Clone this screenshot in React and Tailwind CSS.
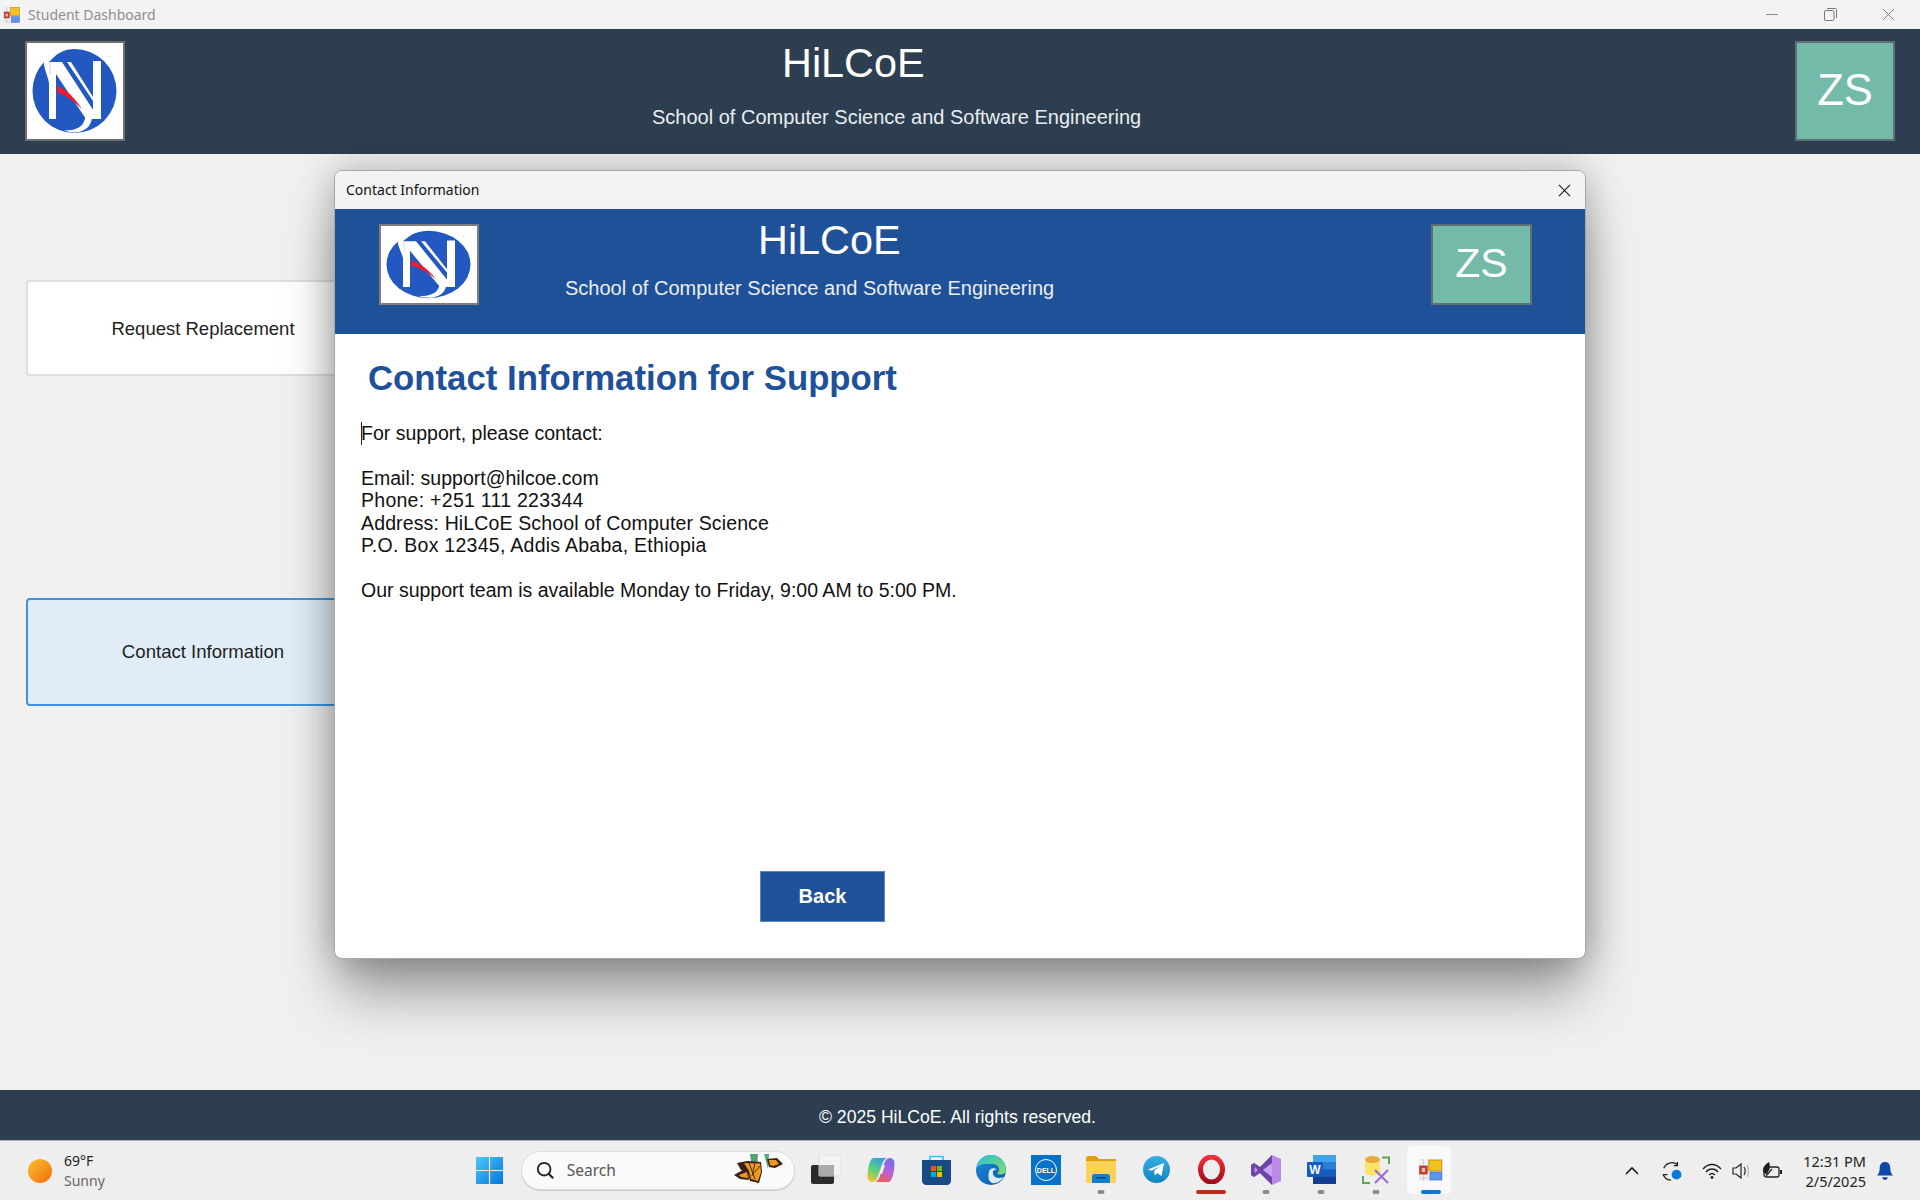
const sans = { fontFamily: '"Liberation Sans", Arial, sans-serif' };

function Logo({ className }) {
  return (
    <svg viewBox="2 2 96 96" preserveAspectRatio="none" className={className}>
      <circle cx="49.5" cy="50" r="42" fill="#2358c0" />
      <path d="M44 8C30 9 18 14 19 24C20 30 23 36 24 42L24 21L29 16C33 12 38 10 44 8Z" fill="#fff" />
      <path d="M24 21H37L74 78H61L31 33V78H24Z" fill="#fff" />
      <path d="M25 21V34" stroke="#cdd6e6" strokeWidth="1" />
      <path d="M68 20H76V78H71L68 74Z" fill="#fff" />
      <path d="M42 21H46L68 56V60Z" fill="#fff" />
      <path d="M32 45C41 48 50 57 57 68C49 60 41 55 32 51Z" fill="#ee1c32" />
      <path d="M61 75L67 77C66 84 62 89 54 91C48 92 43 91 39 89C47 90 53 88 57 84C59 81 60 78 61 75Z" fill="#fff" />
      <circle cx="84" cy="15" r=".5" fill="#8a8a8a" />
    </svg>
  );
}

function AppIcon({ className }) {
  return (
    <svg viewBox="0 0 24 24" preserveAspectRatio="none" className={className}>
      <rect x="1" y="1" width="22" height="22" fill="#eef0f3" />
      <path d="M1 8H9M1 16H9M1 20H9M5 1V8M5 16V23" stroke="#c9cbd0" strokeWidth="1" />
      <rect x="1.5" y="8" width="7" height="8" fill="#d23a30" stroke="#8f3a30" strokeWidth=".6" />
      <rect x="3.5" y="10" width="3" height="4" fill="#f3b5ac" />
      <rect x="10" y="2" width="12" height="11" fill="#f4c11e" stroke="#a8801a" strokeWidth=".7" />
      <rect x="11" y="14" width="11" height="8" fill="#5e95e6" stroke="#3d6fc0" strokeWidth=".6" />
    </svg>
  );
}

function X({ className, color = '#111', w = 1.1 }) {
  return (
    <svg viewBox="0 0 14 14" className={className}>
      <path d="M1 1L13 13M13 1L1 13" stroke={color} strokeWidth={w} fill="none" />
    </svg>
  );
}

function Zs({ className, text }) {
  return (
    <div style={sans} className={`flex items-center justify-center bg-[#73baa9] text-white border-2 border-[#5f6f74] ${text} ${className}`}>
      ZS
    </div>
  );
}

function Dot({ c = '#8b8b8b', w = 'w-[7px]' }) {
  return <span className={`absolute bottom-[6px] left-1/2 -translate-x-1/2 h-[4px] rounded-full ${w}`} style={{ backgroundColor: c }} />;
}

function TaskIcon({ children, dot, active }) {
  return (
    <div className="relative flex items-center justify-center w-[55px] h-[59px]">
      {active && <span className="absolute left-[3px] right-[9px] top-[5px] bottom-[6px] rounded-[5px] bg-[#f9f9f9] shadow-[2px_0_0_#f5f5f5]" />}
      <span className="relative flex items-center justify-center -mt-[2px]">{children}</span>
      {dot}
    </div>
  );
}

const Snap = () => (
  <svg width="30" height="29" viewBox="0 0 30 29">
    <rect x="0" y="10" width="23" height="19" rx="2" fill="#2a2a2a" />
    <rect x="8" y="0" width="22" height="21" rx="1" fill="#f3f3f3" stroke="#dddddd" />
    <rect x="8" y="10" width="15" height="11" fill="#ababab" />
  </svg>
);
const Copilot = () => (
  <svg width="28" height="26" viewBox="0 0 28 26">
    <defs>
      <linearGradient id="cpa" x1="0.7" y1="0" x2="0.2" y2="1"><stop offset="0" stopColor="#2f9fe8" /><stop offset=".55" stopColor="#5fd07a" /><stop offset="1" stopColor="#f3c62f" /></linearGradient>
      <linearGradient id="cpb" x1="0.7" y1="0" x2="0.3" y2="1"><stop offset="0" stopColor="#6f6fe8" /><stop offset=".5" stopColor="#b85fd8" /><stop offset="1" stopColor="#f2604e" /></linearGradient>
    </defs>
    <path d="M6 1H20C17 2 15.5 5 14.5 9L11 19C10 22 8 25 5 25C2 25 0 22 .5 18C1 12 2 3 6 1Z" fill="url(#cpa)" />
    <path d="M22 25H8C11 24 12.5 21 13.5 17L17 7C18 4 20 1 23 1C26 1 28 4 27.5 8C27 14 26 23 22 25Z" fill="url(#cpb)" />
    <path d="M13 17L15.5 9L18 8L15 17Z" fill="#f6eef8" />
  </svg>
);
const Store = () => (
  <svg width="29" height="30" viewBox="0 0 29 30">
    <path d="M8 6V1.5H21V6" fill="none" stroke="#2ec4ef" strokeWidth="1.6" />
    <path d="M0 5H29V26C29 28 27 30 25 30H4C2 30 0 28 0 26Z" fill="#194a86" />
    <rect x="9" y="11" width="5" height="5" fill="#f25022" />
    <rect x="15" y="11" width="5" height="5" fill="#7fba00" />
    <rect x="9" y="17" width="5" height="5" fill="#00a4ef" />
    <rect x="15" y="17" width="5" height="5" fill="#ffb900" />
  </svg>
);
const Edge = () => (
  <svg width="30" height="30" viewBox="0 0 30 30">
    <defs>
      <linearGradient id="eda" x1="0" y1="0" x2="1" y2="1"><stop offset="0" stopColor="#2cc2d6" /><stop offset="1" stopColor="#7fdc6a" /></linearGradient>
      <linearGradient id="edb" x1="0" y1="0" x2="1" y2="1"><stop offset="0" stopColor="#1a8bdc" /><stop offset="1" stopColor="#0c5aa8" /></linearGradient>
    </defs>
    <circle cx="15" cy="15" r="15" fill="url(#edb)" />
    <path d="M0.5 13C2 5 8 0 15 0C24 0 30 7 30 16C30 19 25 20 21 19C25 15 23 9 16 9C9 8 3 9 .5 13Z" fill="url(#eda)" />
    <path d="M13 17C13 13 19 12 21 15C18 14 16 16 17 19C18 23 23 24 28 22C25 26 20 29 16 28C12 26 12 21 13 17Z" fill="#eef5fb" opacity=".92" />
  </svg>
);
const Dell = () => (
  <svg width="30" height="30" viewBox="0 0 30 30">
    <rect width="30" height="30" fill="#0672cb" />
    <circle cx="15" cy="15" r="10.5" fill="none" stroke="#fff" strokeWidth="1" />
    <text x="15" y="17.5" textAnchor="middle" fontSize="7" fill="#fff" fontWeight="700" style={sans}>DELL</text>
  </svg>
);
const Folder = () => (
  <svg width="30" height="27" viewBox="0 0 30 27">
    <path d="M0 3C0 1 1 0 3 0H10L13 3H30V10H0Z" fill="#e0a100" />
    <rect x="0" y="5" width="30" height="22" rx="1" fill="#fcd25a" />
    <path d="M6 27V20C6 19 7 18 8 18H22C23 18 24 19 24 20V27Z" fill="#0f7fd0" />
    <rect x="10" y="21" width="10" height="1.4" fill="#063c70" />
  </svg>
);
const Telegram = () => (
  <svg width="27" height="27" viewBox="0 0 27 27">
    <defs><linearGradient id="tg" x1="0" y1="0" x2="0" y2="1"><stop offset="0" stopColor="#38aee5" /><stop offset="1" stopColor="#0f84bf" /></linearGradient></defs>
    <circle cx="13.5" cy="13.5" r="13.5" fill="url(#tg)" />
    <path d="M5 13.5L21 7L18.5 20L14 17L12 19.5L11 15L17.5 10L8.5 14.8Z" fill="#fff" />
  </svg>
);
const Opera = () => (
  <svg width="27" height="29" viewBox="0 0 27 29">
    <defs><linearGradient id="op" x1="0" y1="0" x2="0" y2="1"><stop offset="0" stopColor="#f0303c" /><stop offset="1" stopColor="#a50b18" /></linearGradient></defs>
    <ellipse cx="13.5" cy="14.5" rx="11" ry="12.5" fill="none" stroke="url(#op)" strokeWidth="5" />
  </svg>
);
const VS = () => (
  <svg width="30" height="30" viewBox="0 0 30 30">
    <path d="M21 0L30 4V26L21 30L9 18L3 22L0 20V10L3 8L9 12Z" fill="#b98ae8" />
    <path d="M21 0L9 12L3 8L0 10V20L3 22L9 18L21 30Z" fill="#6c45a8" />
    <path d="M21 8V22L12 15Z" fill="#c9a3f2" />
    <path d="M4 12L3 15L4 18L7 15Z" fill="#b98ae8" />
  </svg>
);
const Word = () => (
  <svg width="29" height="29" viewBox="0 0 29 29">
    <rect x="6" y="0" width="23" height="29" rx="2" fill="#2b7cd3" />
    <rect x="6" y="0" width="23" height="7" fill="#41a5ee" />
    <rect x="6" y="14.5" width="23" height="7" fill="#185abd" />
    <rect x="6" y="21.5" width="23" height="7.5" fill="#103f91" />
    <rect x="0" y="7" width="16" height="15" rx="1" fill="#185abd" />
    <text x="8" y="19" textAnchor="middle" fontSize="12" fontWeight="700" fill="#fff" style={sans}>W</text>
  </svg>
);
const DbTool = () => (
  <svg width="28" height="28" viewBox="0 0 28 28">
    <path d="M20 1.5H27V8M1 20V27H8" fill="none" stroke="#58a55c" strokeWidth="2" />
    <path d="M3 3V16C3 18 7 19.5 10.5 19.5C14 19.5 18 18 18 16V3Z" fill="#fbe36a" />
    <ellipse cx="10.5" cy="3.5" rx="7.5" ry="3.5" fill="#e8a93c" />
    <path d="M13 27L26 14M26 27L13 14" stroke="#9a6fd0" strokeWidth="2.2" />
  </svg>
);

function Butterfly() {
  return (
    <svg width="70" height="44" viewBox="0 0 70 44">
      <path d="M25 6C26 16 30 28 33 37C33 26 32 14 33 6Z" fill="#4fa36c" />
      <path d="M39 6L43 21L44 6Z" fill="#5aa978" />
      <path d="M12 15L22 13L36 14L37 24L34 35L25 33L23 26L16 22Z" fill="#3a2218" />
      <path d="M19 15L35 15.5L36 24L33 33L26 31L24 23Z" fill="#ee9a1c" />
      <path d="M24 15L30 31M30 15L27 28M35 18L28 26" stroke="#3a2218" strokeWidth=".9" />
      <path d="M9 27L16 23L23 22L24 32L15 31Z" fill="#3a2218" />
      <path d="M14 27L22 24L23 30L16 29Z" fill="#ee9a1c" />
      <path d="M42 11L52 10L58 16L50 20L44 19Z" fill="#3a2218" />
      <path d="M44 12L51 12L54 16L48 18L45 17Z" fill="#e89a24" />
    </svg>
  );
}

export default function App() {
  return (
    <div className="relative flex flex-col w-[1920px] h-[1200px] overflow-hidden bg-[#f0f0f0]" style={sans}>
      <div className="flex items-center h-[29px] bg-[#f3f3f3] shrink-0">
        <AppIcon className="ml-[3px] w-[18px] h-[18px]" />
        <span className="ml-[7px] text-[14px] text-[#8e8e8e]" style={{ fontFamily: '"Noto Sans", sans-serif' }}>Student Dashboard</span>
        <div className="ml-auto flex items-center mr-[3px]">
          <span className="w-[58px] flex justify-center"><span className="block w-[12px] h-px bg-[#8a8a8a]" /></span>
          <span className="w-[58px] flex justify-center">
            <svg width="13" height="13" viewBox="0 0 13 13"><rect x=".5" y="2.5" width="9.5" height="10" rx="1.5" fill="none" stroke="#777" /><path d="M3 .5H11C12 .5 12.5 1 12.5 2V10" fill="none" stroke="#777" /></svg>
          </span>
          <span className="w-[58px] flex justify-center"><X className="w-[13px] h-[13px]" color="#777" w={1} /></span>
        </div>
      </div>

      <header className="flex items-center justify-between h-[125px] px-[25px] pb-[1px] bg-[#2c3e50] shrink-0">
        <div className="w-[100px] h-[100px] bg-white border-2 border-[#6f6f6f] shrink-0">
          <Logo className="w-full h-full" />
        </div>
        <div className="flex-1 h-full flex flex-col pl-[527px] text-white">
          <div className="ml-[130px] mt-[11px] text-[41.4px] leading-[46px]">HiLCoE</div>
          <div className="mt-[19px] text-[20px] leading-[24px] text-[#e9edf1]">School of Computer Science and Software Engineering</div>
        </div>
        <Zs className="w-[100px] h-[100px] shrink-0" text="text-[43.5px]" />
      </header>

      <main className="flex-1 flex flex-col px-[26px]">
        <div className="mt-[126px] w-[354px] h-[96px] flex items-center justify-center pt-[1px] bg-white border-2 border-[#dedede] rounded-[4px] text-[18.5px] text-[#1e1e1e]">Request Replacement</div>
        <div className="mt-[222px] w-[354px] h-[108px] flex items-center justify-center bg-[#e0edf8] border-2 border-[#3d94dc] rounded-[4px] text-[18.6px] text-[#1e1e1e]">Contact Information</div>
      </main>

      <footer className="flex items-center justify-center h-[51px] bg-[#2c3e50] text-white text-[17.6px] shrink-0 pt-[4px] pr-[5px] border-b border-[#a9aeb2]">© 2025 HiLCoE. All rights reserved.</footer>

      <div className="relative flex items-center h-[59px] bg-[#eeeeee] shrink-0" style={{ fontFamily: '"Noto Sans", sans-serif' }}>
        <div className="w-[24px] h-[24px] ml-[28px] rounded-full bg-gradient-to-br from-[#f4c02e] to-[#f26c0c]" />
        <div className="ml-[12px] flex flex-col leading-[20px]">
          <span className="text-[14px] text-[#222]">69°F</span>
          <span className="text-[14px] text-[#666]">Sunny</span>
        </div>
        <svg className="ml-[370px]" width="29" height="29" viewBox="0 0 30 30">
          <defs><linearGradient id="win" x1="0" y1="0" x2="1" y2="1"><stop offset="0" stopColor="#4cc6fb" /><stop offset="1" stopColor="#0578d6" /></linearGradient></defs>
          <path d="M1 1H14.4V14.4H1ZM15.6 1H29V14.4H15.6ZM1 15.6H14.4V29H1ZM15.6 15.6H29V29H15.6Z" fill="url(#win)" />
        </svg>
        <div className="relative ml-[17px] flex items-center w-[274px] h-[39px] rounded-full bg-[#fafafa] border border-[#dddddd] shadow-[0_1px_0_#cccccc]">
          <svg className="ml-[14px]" width="19" height="19" viewBox="0 0 21 21"><circle cx="9" cy="9" r="7" fill="none" stroke="#1f1f1f" strokeWidth="2" /><path d="M14 14L19 19" stroke="#1f1f1f" strokeWidth="2.4" /></svg>
          <span className="ml-[12px] text-[15.5px] text-[#555]">Search</span>
          <span className="absolute right-[-1px] top-[-4px]"><Butterfly /></span>
        </div>
        <div className="ml-[4px] flex items-center">
          <TaskIcon><Snap /></TaskIcon>
          <TaskIcon><Copilot /></TaskIcon>
          <TaskIcon><Store /></TaskIcon>
          <TaskIcon><Edge /></TaskIcon>
          <TaskIcon><Dell /></TaskIcon>
          <TaskIcon dot={<Dot />}><Folder /></TaskIcon>
          <TaskIcon><Telegram /></TaskIcon>
          <TaskIcon dot={<Dot c="#c42a1c" w="w-[30px]" />}><Opera /></TaskIcon>
          <TaskIcon dot={<Dot />}><VS /></TaskIcon>
          <TaskIcon dot={<Dot />}><Word /></TaskIcon>
          <TaskIcon dot={<Dot />}><DbTool /></TaskIcon>
          <TaskIcon active dot={<Dot c="#0a78d4" w="w-[20px]" />}><AppIcon className="w-[26px] h-[24px]" /></TaskIcon>
        </div>
        <div className="ml-auto flex items-center mr-[27px]">
          <svg width="14" height="9" viewBox="0 0 14 9"><path d="M1 8L7 2L13 8" fill="none" stroke="#1c1c1c" strokeWidth="1.6" /></svg>
          <svg className="ml-[23px]" width="20" height="20" viewBox="0 0 22 22"><path d="M2 8C4 2 12 0 17 4M17 1V5H13" fill="none" stroke="#222" strokeWidth="1.4" /><path d="M1 15H6M1 15L4 19C6 21 9 21 10 21" fill="none" stroke="#222" strokeWidth="1.4" /><circle cx="16" cy="15" r="5.4" fill="#0a78d4" /></svg>
          <svg className="ml-[20px]" width="20" height="16" viewBox="0 0 20 16"><path d="M1 6C6 0 14 0 19 6M4 9C7 5 13 5 16 9M7 12C9 10 11 10 13 12" fill="none" stroke="#222" strokeWidth="1.3" /><circle cx="10" cy="14.5" r="1.4" fill="#222" /></svg>
          <svg className="ml-[10px]" width="20" height="16" viewBox="0 0 20 16"><path d="M1 5H4L9 1V15L4 11H1Z" fill="none" stroke="#222" strokeWidth="1.2" /><path d="M12 4C13.5 6 13.5 10 12 12" fill="none" stroke="#222" strokeWidth="1.2" /><path d="M15 2C17 5 17 11 15 14" fill="none" stroke="#b5b5b5" strokeWidth="1.2" /></svg>
          <svg className="ml-[10px]" width="20" height="18" viewBox="0 0 20 18"><rect x="2" y="5" width="15" height="10" rx="2" fill="none" stroke="#222" strokeWidth="1.3" /><rect x="18" y="8" width="2" height="4" fill="#222" /><path d="M1 9C1 4 5 1 7 0C8 3 9 6 6 10C5 13 3 13 1 9Z" fill="#222" /><path d="M4 14L10 7" stroke="#222" strokeWidth="1.2" /></svg>
          <div className="ml-[21px] flex flex-col items-end text-[14.5px] leading-[20px] text-[#222]">
            <span>12:31 PM</span>
            <span>2/5/2025</span>
          </div>
          <svg className="ml-[11px]" width="16" height="20" viewBox="0 0 18 22"><path d="M9 1C5 1 3 4 3 8C3 12 2 14 0 16H18C16 14 15 12 15 8C15 4 13 1 9 1Z" fill="#0f48a8" /><path d="M6 18H12C12 20 10 21 9 21C8 21 6 20 6 18Z" fill="#0f48a8" /></svg>
        </div>
      </div>

      <div className="absolute left-[334px] top-[170px] w-[1252px] h-[789px] flex flex-col bg-white rounded-[8px] border border-[#a8a8a8] overflow-hidden shadow-[0_0_36px_rgba(0,0,0,0.26),0_40px_55px_-5px_rgba(0,0,0,0.34)]">
        <div className="flex items-center justify-between h-[38px] pl-[11px] pr-[14px] bg-[#f3f3f3] shrink-0">
          <span className="text-[14px] text-[#111] -mt-[1px]" style={{ fontFamily: '"Noto Sans", sans-serif' }}>Contact Information</span>
          <X className="w-[13px] h-[13px]" />
        </div>
        <div className="flex items-start justify-between h-[125px] pl-[44px] pr-[53px] pt-[15px] bg-[#1f5199] text-white shrink-0">
          <div className="w-[100px] h-[81px] bg-white border-2 border-[#7d7d7d] shrink-0">
            <Logo className="w-full h-full" />
          </div>
          <div className="flex-1 flex flex-col pl-[86px] -mt-[15px]">
            <div className="ml-[193px] mt-[8px] text-[41.4px] leading-[46px]">HiLCoE</div>
            <div className="mt-[13px] text-[20px] leading-[24px] text-[#e9edf1]">School of Computer Science and Software Engineering</div>
          </div>
          <Zs className="w-[101px] h-[81px] pb-[2px] shrink-0" text="text-[41px]" />
        </div>
        <div className="flex-1 relative flex flex-col items-start pl-[26px]">
          <h1 className="ml-[7px] mt-[24px] text-[34.75px] leading-[40px] font-bold text-[#1f5199]">Contact Information for Support</h1>
          <div className="relative mt-[24px] text-[19.5px] leading-[22.4px] text-[#111]">
            <span className="absolute left-0 top-[0px] w-px h-[23px] bg-[#222]" />
            <p className="mb-[22.4px]">For support, please contact:</p>
            <p>Email: support@hilcoe.com</p>
            <p className="tracking-[0.27px]">Phone: +251 111 223344</p>
            <p className="tracking-[0.14px]">Address: HiLCoE School of Computer Science</p>
            <p className="tracking-[0.27px] mb-[22.4px]">P.O. Box 12345, Addis Ababa, Ethiopia</p>
            <p>Our support team is available Monday to Friday, 9:00 AM to 5:00 PM.</p>
          </div>
          <button className="mt-[270px] ml-[399px] w-[125px] h-[51px] pb-[2px] bg-[#1f5199] text-white text-[20px] font-bold border border-[#5d86c0]">Back</button>
        </div>
      </div>
    </div>
  );
}
